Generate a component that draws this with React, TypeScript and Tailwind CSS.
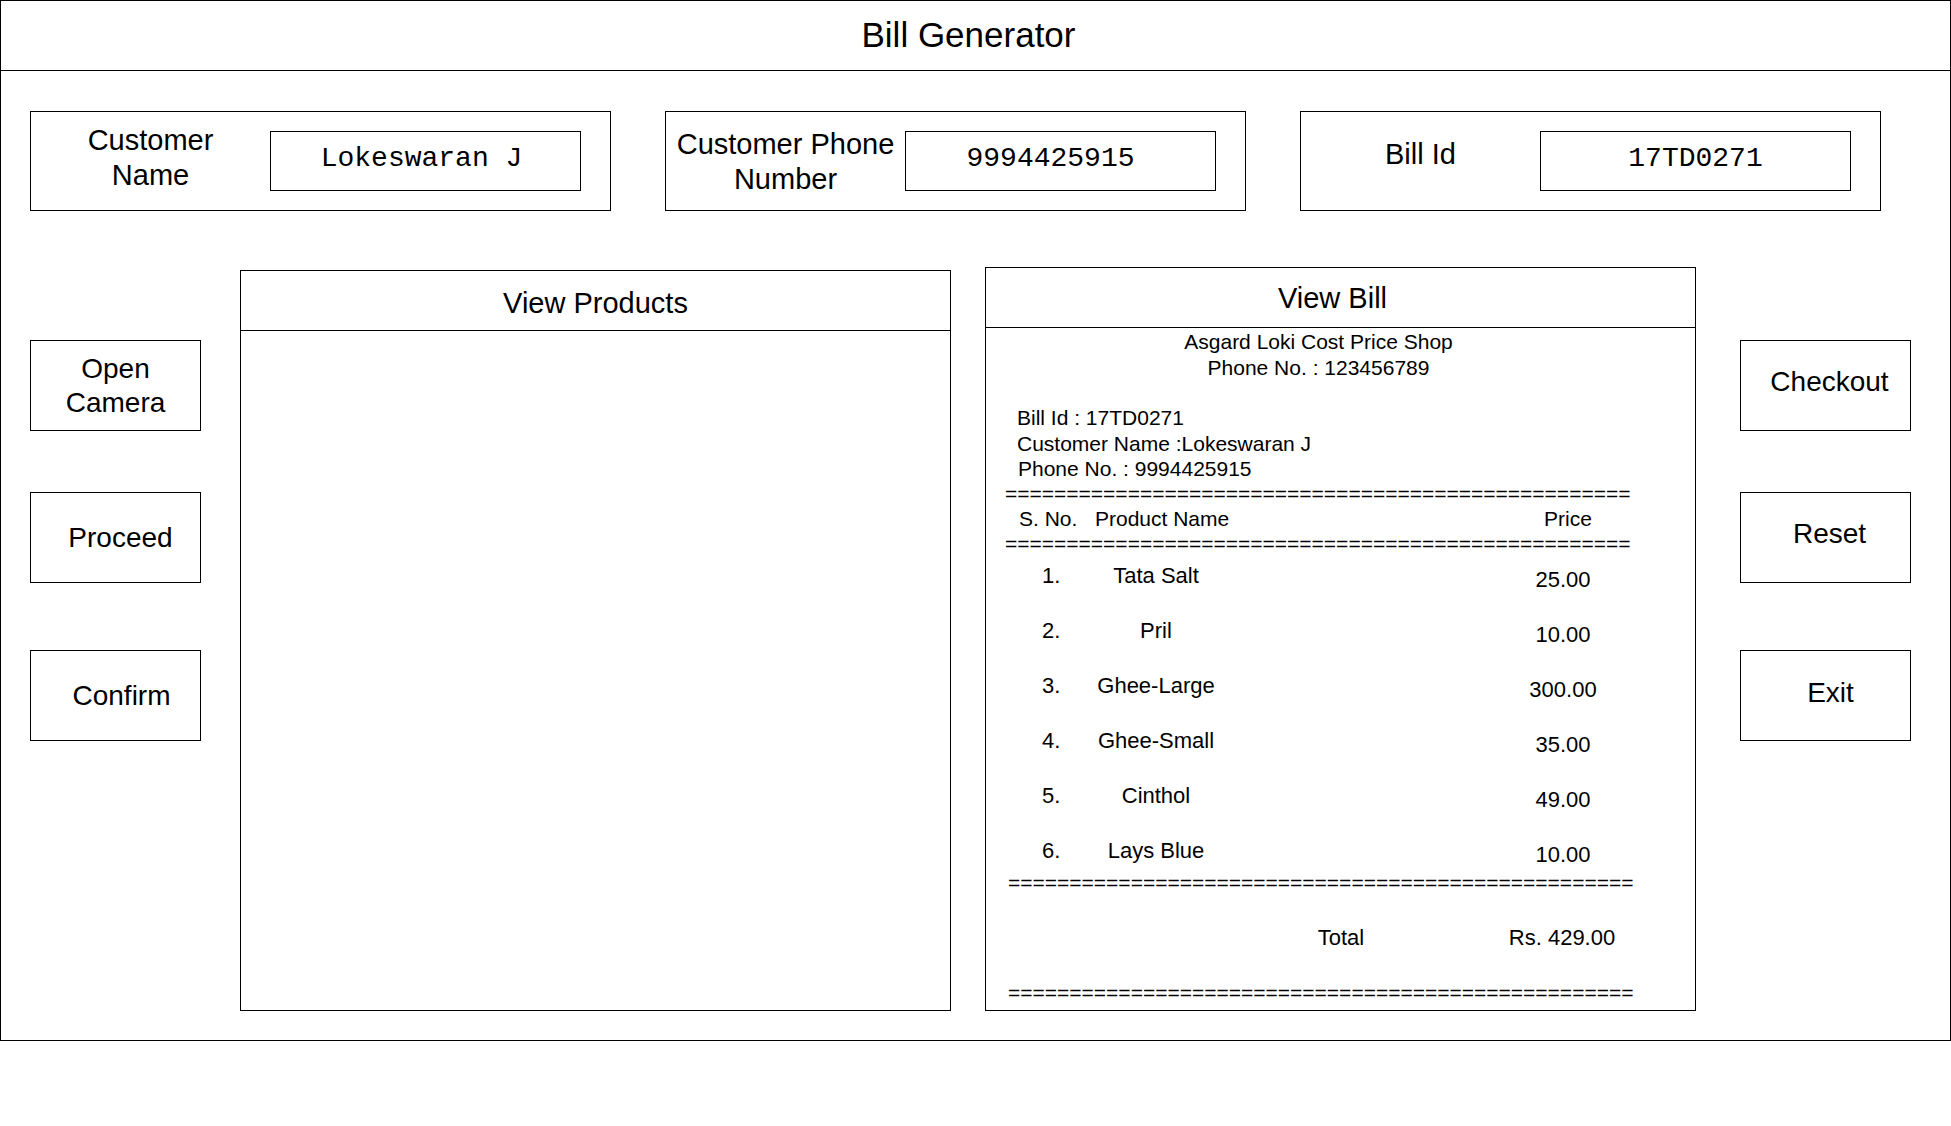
import React from 'react'

const items = [
  { no: '1.', name: 'Tata Salt', price: '25.00' },
  { no: '2.', name: 'Pril', price: '10.00' },
  { no: '3.', name: 'Ghee-Large', price: '300.00' },
  { no: '4.', name: 'Ghee-Small', price: '35.00' },
  { no: '5.', name: 'Cinthol', price: '49.00' },
  { no: '6.', name: 'Lays Blue', price: '10.00' },
]

const rule = '='.repeat(51)

function Field({ label, value, pad, labelPad }: { label: React.ReactNode; value: string; pad: string; labelPad: string }) {
  return (
    <div className="flex items-center w-[581px] h-[100px] border border-black">
      <div className={`flex-1 text-center text-[29px] leading-[35px] ${labelPad}`}>{label}</div>
      <div className={`flex items-center justify-center w-[311px] h-[60px] mr-[29px] pb-[4px] border border-black font-['Liberation_Mono',monospace] text-[28px] ${pad}`}>
        {value}
      </div>
    </div>
  )
}

function Btn({ children, className }: { children: React.ReactNode; className: string }) {
  return (
    <div className={`flex items-center justify-center w-[171px] h-[91px] border border-black text-[28px] leading-[34px] text-center ${className}`}>
      {children}
    </div>
  )
}

export default function App() {
  return (
    <div className="w-[1951px] h-[1126px] bg-white text-black font-['Liberation_Sans',Arial,sans-serif]">
      <div className="flex flex-col h-[1041px] border border-black">
        {/* Title */}
        <div className="flex items-center justify-center h-[70px] border-b border-black pr-[14px] text-[35px]">
          Bill Generator
        </div>

        {/* Customer fields */}
        <div className="flex gap-[54px] mt-[40px] pl-[29px]">
          <Field label={<>Customer<br />Name</>} value="Lokeswaran J" pad="pr-[8px]" labelPad="pb-[6px]" />
          <Field label={<>Customer Phone<br />Number</>} value="9994425915" pad="pr-[20px]" labelPad="pt-[2px]" />
          <Field label="Bill Id" value="17TD0271" pad="" labelPad="pb-[13px]" />
        </div>

        {/* Main */}
        <div className="flex items-start mt-[56px] pl-[29px]">
          <div className="flex flex-col w-[171px] pt-[73px]">
            <Btn className="">Open<br />Camera</Btn>
            <Btn className="mt-[61px] pl-[10px]">Proceed</Btn>
            <Btn className="mt-[67px] pl-[12px]">Confirm</Btn>
          </div>

          <div className="flex flex-col ml-[39px] mt-[3px] w-[711px] h-[741px] border border-black">
            <div className="flex items-center justify-center h-[60px] border-b border-black pt-[6px] text-[29px]">
              View Products
            </div>
          </div>

          <div className="flex flex-col ml-[34px] w-[711px] h-[744px] border border-black">
            <div className="flex items-center justify-center h-[60px] border-b border-black pt-[2px] pr-[16px] text-[29px]">
              View Bill
            </div>
            <div className="flex flex-col pt-[1px]">
              <div className="w-[665px] text-center text-[21px] leading-[26px]">
                <div>Asgard Loki Cost Price Shop</div>
                <div>Phone No. : 123456789</div>
              </div>
              <div className="mt-[24px] pl-[31px] text-[21px] leading-[25.5px]">
                <div>Bill Id : 17TD0271</div>
                <div>Customer Name :Lokeswaran J</div>
                <div className="pl-[1px]">Phone No. : 9994425915</div>
              </div>
              <div className="pl-[19px] text-[21px] leading-[24px] whitespace-nowrap">{rule}</div>
              <div className="flex pl-[33px] text-[21px] leading-[26px]">
                <div className="w-[76px]">S. No.</div>
                <div className="w-[449px]">Product Name</div>
                <div>Price</div>
              </div>
              <div className="pl-[19px] text-[21px] leading-[24px] whitespace-nowrap">{rule}</div>
              {items.map((it, i) => (
                <div key={it.no} className={`flex items-start pl-[56px] text-[22px] leading-[26px] ${i === 5 ? 'h-[40px]' : 'h-[55px]'}`}>
                  <div className="w-[34px] pt-[7px]">{it.no}</div>
                  <div className="w-[160px] pt-[7px] text-center">{it.name}</div>
                  <div className="w-[267px]" />
                  <div className="w-[120px] pt-[11px] text-center">{it.price}</div>
                </div>
              ))}
              <div className="pl-[22px] text-[21px] leading-[24px] whitespace-nowrap">{rule}</div>
              <div className="flex mt-[30px] pl-[305px] text-[22px] leading-[26px]">
                <div className="w-[100px] text-center">Total</div>
                <div className="w-[111px]" />
                <div className="w-[120px] text-center">Rs. 429.00</div>
              </div>
              <div className="mt-[30px] pl-[22px] text-[21px] leading-[24px] whitespace-nowrap">{rule}</div>
            </div>
          </div>

          <div className="flex flex-col ml-[44px] w-[171px] pt-[73px]">
            <Btn className="pl-[8px] pb-[8px]">Checkout</Btn>
            <Btn className="mt-[61px] pl-[8px] pb-[8px]">Reset</Btn>
            <Btn className="mt-[67px] pl-[10px] pb-[6px]">Exit</Btn>
          </div>
        </div>
      </div>
    </div>
  )
}
